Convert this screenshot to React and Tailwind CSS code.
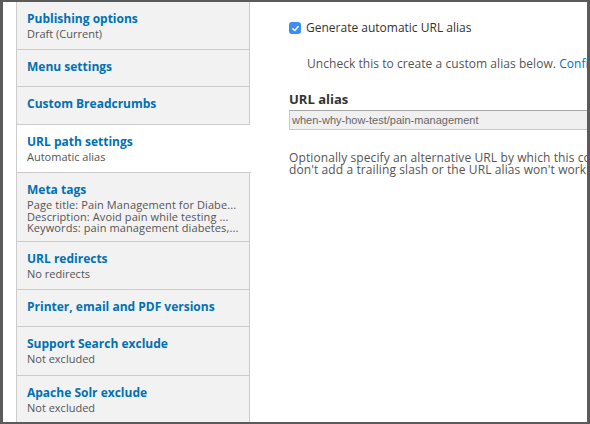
import React from "react";

const tabs = [
  { title: "Publishing options", lines: ["Draft (Current)"] },
  { title: "Menu settings", lines: [] },
  { title: "Custom Breadcrumbs", lines: [], pad: "pb-[12px]" },
  { title: "URL path settings", lines: ["Automatic alias"], active: true },
  {
    title: "Meta tags",
    pad: "pb-[7px]",
    meta: [
      "Page title: Pain Management for Diabe...",
      "Description: Avoid pain while testing ...",
      "Keywords: pain management diabetes,...",
    ],
  },
  { title: "URL redirects", lines: ["No redirects"] },
  { title: "Printer, email and PDF versions", lines: [] },
  { title: "Support Search exclude", lines: ["Not excluded"], pad: "pb-[9px]" },
  { title: "Apache Solr exclude", lines: ["Not excluded"] },
];

function Tab({ tab }) {
  const single = !tab.meta && tab.lines.length === 0;
  const pad = tab.pad || (single ? "pb-[11px]" : "pb-[8px]");
  return (
    <li
      className={
        "border-b border-[#cccccc] px-[10px] pt-[9px] " +
        pad +
        " " +
        (tab.active ? "bg-white -mr-px" : "bg-[#f2f2f2] border-r")
      }
    >
      <a className="block text-[12px] leading-[16px] font-bold text-[#0071b3]">
        {tab.title}
      </a>
      {tab.lines &&
        tab.lines.map((l) => (
          <div key={l} className="text-[11px] leading-[14px] text-[#555555]">
            {l}
          </div>
        ))}
      {tab.meta && (
        <div className="mt-[1px]">
          {tab.meta.map((l) => (
            <div
              key={l}
              className="text-[11px] leading-[11.5px] tracking-[0.1px] text-[#555555] whitespace-nowrap"
            >
              {l}
            </div>
          ))}
        </div>
      )}
    </li>
  );
}

export default function App() {
  return (
    <div
      className="w-[590px] h-[424px] bg-[#5b5b5b] pt-[2px] pb-[2px] pl-[3px] pr-[3px]"
      style={{ fontFamily: '"Open Sans", sans-serif' }}
    >
      <div className="w-full h-full bg-white flex overflow-hidden pl-[13px]">
        <ul className="w-[234px] shrink-0 border-l border-[#cccccc] bg-[#f2f2f2]">
          {tabs.map((t) => (
            <Tab key={t.title} tab={t} />
          ))}
        </ul>
        <div className="pl-[39px] pt-[18px] w-[600px] shrink-0">
          <label className="flex items-center gap-[5px] text-[12px] leading-[16px] text-[#333333]">
            <span className="w-[12px] h-[12px] rounded-[3px] bg-[#3b8ef6] flex items-center justify-center">
              <svg width="9" height="9" viewBox="0 0 10 10">
                <path
                  d="M2 5.2 L4.2 7.3 L8 2.8"
                  fill="none"
                  stroke="white"
                  strokeWidth="1.6"
                  strokeLinecap="round"
                  strokeLinejoin="round"
                />
              </svg>
            </span>
            Generate automatic URL alias
          </label>
          <p className="mt-[20px] pl-[18px] text-[12px] leading-[16px] tracking-[0.05px] text-[#555555] whitespace-nowrap">
            Uncheck this to create a custom alias below.{" "}
            <a className="text-[#0071b3]">Configure URL alias patterns.</a>
          </p>
          <div className="mt-[19px] text-[13px] leading-[16px] font-bold text-[#333333]">
            URL alias
          </div>
          <div
            className="mt-[3px] h-[20px] border border-[#c8c8c8] border-t-[#a8a8a8] bg-[#f0f0f0] pl-[2px] flex items-center text-[11px] text-[#666666]"
            style={{ fontFamily: '"Liberation Sans", Arial, sans-serif' }}
          >
            when-why-how-test/pain-management
          </div>
          <p className="mt-[22px] text-[12px] leading-[12px] tracking-[0.1px] text-[#555555] whitespace-nowrap">
            Optionally specify an alternative URL by which this content can be accessed. For example,
            <br />
            don't add a trailing slash or the URL alias won't work.
          </p>
        </div>
      </div>
    </div>
  );
}
